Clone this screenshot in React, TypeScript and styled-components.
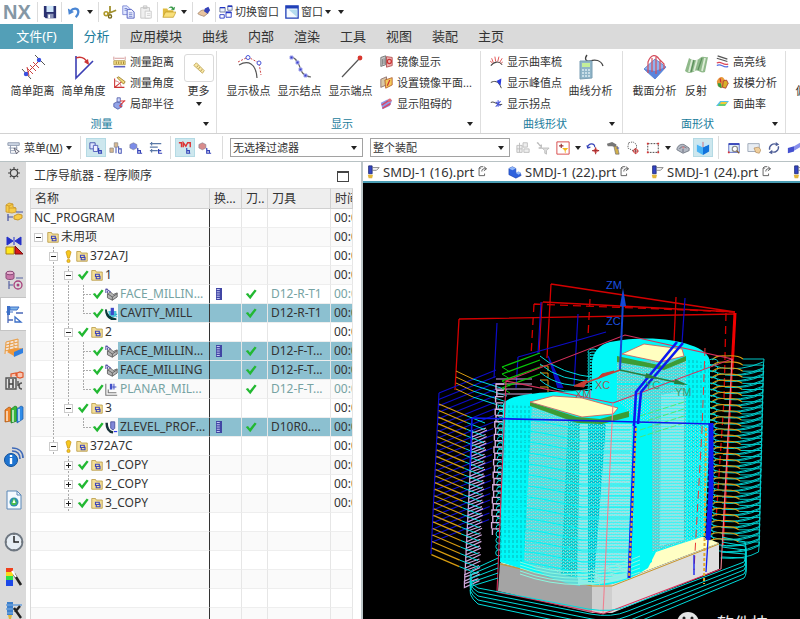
import React from "react";
import styled, { createGlobalStyle, css } from "styled-components";

const GlobalStyle = createGlobalStyle`
  *, *::before, *::after { box-sizing: border-box; }
  html, body { margin: 0; padding: 0; }
  body {
    background: #fff;
    color: #333;
    font-family: "Noto Sans", "Noto Sans CJK SC", sans-serif;
    font-size: 11px;
    line-height: 16px;
  }
  button, select {
    font: inherit;
    color: inherit;
    background: none;
    border: 0;
    padding: 0;
    margin: 0;
    border-radius: 0;
  }
`;

/* ---------- icons ---------- */

type Kids = { children?: React.ReactNode };
const Glyph = styled.svg<{ $size: number }>`
  display: block;
  flex: none;
  width: ${(p) => p.$size}px;
  height: ${(p) => p.$size}px;
  fill: none;
`;
const Pic = ({ size = 14, box = 16, children }: { size?: number; box?: number } & Kids) => (
  <Glyph $size={size} viewBox={`0 0 ${box} ${box}`} aria-hidden="true">
    {children}
  </Glyph>
);

const Save = () => (
  <Pic>
    <path d="M1 1h14v14H3l-2-2z" fill="#2a3170" />
    <path d="M4 1h8v7H4z" fill="#cfe6fa" />
    <path d="M5 10h7v5H5z" fill="#8a93b8" />
    <path d="M6 11h2v4H6z" fill="#fff" />
  </Pic>
);
const Undo = () => (
  <Pic>
    <path d="M4 7C7 3 13 3 13 8c0 3-1 4-3 6" stroke="#4a86d4" strokeWidth="2.600" />
    <path d="M1 4l1 7 6-3z" fill="#4a86d4" />
  </Pic>
);
const Cut = () => (
  <Pic>
    <path d="M8 1v8M15 6L5 10" stroke="#a08f2c" strokeWidth="2" />
    <circle cx="3.500" cy="10" r="2.200" stroke="#b09a2a" strokeWidth="1.800" />
    <circle cx="8" cy="13" r="1.800" stroke="#7a6c1a" strokeWidth="1.600" />
  </Pic>
);
const Copy = () => (
  <Pic>
    <path d="M2 1h5l3 3v7H2z" fill="#dfe6ff" stroke="#7a86d4" />
    <path d="M7 5h5l3 3v7H7z" fill="#eef1ff" stroke="#4652bc" />
    <path d="M4 4h3M4 6h3M9 9h4M9 11h4M9 13h4" stroke="#7080cc" />
  </Pic>
);
const Paste = () => (
  <Pic>
    <path d="M2 3h10v12H2zM5 1h4v3H5z" fill="#efefef" stroke="#c4c4c4" />
    <path d="M7 7h7v8H7z" fill="#fafafa" stroke="#c8c8c8" />
    <path d="M9 10h4M9 12h4" stroke="#d0d0d0" />
  </Pic>
);
const Open = () => (
  <Pic>
    <path d="M1 4h5l1 2h6v8H1z" fill="#e0bb40" />
    <path d="M1 14l3-6h12l-3 6z" fill="#f9e07a" stroke="#b8901c" strokeWidth=".7" />
    <path d="M7 4c2-3 5-3 6-1l2-1-1 4-4-1 1.500-.8C11 3 9 3 7 4z" fill="#3a9a4a" />
  </Pic>
);
const Touch = () => (
  <Pic>
    <path d="M1 10c2-3 5-5 8-4l4 3-5 4c-2-1-4-1-7-3z" fill="#e8c5a0" stroke="#9a7a60" strokeWidth=".8" />
    <path d="M9 4l4-2 2 4-3 4-4-3z" fill="#3442b8" />
  </Pic>
);
const SwitchWin = () => (
  <Pic>
    <path d="M1 3h6v5H1zM10 1h5v5h-5z" fill="#eef4ff" stroke="#6a7698" />
    <path d="M1 11h5v4H1zM8 8h6v6H8z" fill="#fff" stroke="#2436c4" />
    <path d="M1 3h6M10 1.500h5M8 8.500h6" stroke="#2436c4" strokeWidth="1.600" />
  </Pic>
);
const WinIcon = () => (
  <Pic>
    <path d="M1 1h14v14H1z" fill="#f4fafe" stroke="#2140b8" strokeWidth="1.500" />
    <path d="M1 1h14v3H1z" fill="#2140b8" />
    <path d="M4 5h10v9z" fill="#b4dcee" />
  </Pic>
);
const SimpleDist = () => (
  <Pic size={26} box={26}>
    <path d="M2 15l9 10M15 1l10 10" stroke="#555" />
    <path d="M5 21L20 6" stroke="#c33" />
    <path d="M7 14l6 6M10 11l6 6M13 8l6 6M7 13l2 9" stroke="#c44" />
    <circle cx="6" cy="20" r="2.200" fill="#3a4fe0" />
    <circle cx="19" cy="6" r="2.200" fill="#3a4fe0" />
  </Pic>
);
const SimpleAngle = () => (
  <Pic size={26} box={26}>
    <path d="M5 2v22L22 7" stroke="#3b3fb4" strokeWidth="1.600" />
    <path d="M5 4c5-2 9 0 12 5" stroke="#c33" strokeWidth="1.300" />
    <path d="M18 11l-5-3 4-3z" fill="#c33" />
  </Pic>
);
const RulerH = () => (
  <Pic size={13}>
    <path d="M1 7h14v5H1z" fill="#f7e08a" stroke="#b09848" />
    <path d="M4 8v3M7 8v3M10 8v3M13 8v3" stroke="#8a7020" />
    <path d="M1 2v4M15 2v4M2 4h12" stroke="#c88" />
    <path d="M1 14.500h14" stroke="#3b3fb4" strokeWidth="1.500" />
  </Pic>
);
const AngleRuler = () => (
  <Pic size={13}>
    <path d="M2 3v11h12M2 14L12 6" stroke="#c33" strokeWidth="1.300" />
    <path d="M2 6c5 0 8 4 8 8" stroke="#c66" />
    <path d="M5 2l2-1 8 6-2 3z" fill="#f3d97a" stroke="#94782a" />
  </Pic>
);
const Radius = () => (
  <Pic size={13}>
    <path d="M1 8l4-2 6 2v4l-5 3-5-3z" fill="#93a5e8" stroke="#4b57a4" />
    <path d="M5 1h4v5H5z" fill="#cfd8ff" stroke="#4b57a4" />
    <path d="M15 4L8 11M9 5h6M8 11l3 1" stroke="#d33" strokeWidth="1.300" />
  </Pic>
);
const MoreRuler = () => (
  <Pic size={14}>
    <path d="M2 5l3-3 9 9-2 3z" fill="#f9e7a4" stroke="#c0a85c" />
    <path d="M7 5L5.500 7M9 7l-1.500 2M11.500 9.500L10 11.500" stroke="#a8904a" />
  </Pic>
);
const Poles = () => (
  <Pic size={26} box={26}>
    <path d="M3 11c9-5 17-2 18 13" stroke="#555" strokeWidth="1.200" />
    <path d="M2 8l10-5 11 6 2 12" stroke="#c44" strokeDasharray="2 1.500" />
    <circle cx="12" cy="3.500" r="2" fill="#fff" stroke="#4653d8" />
    <circle cx="23" cy="9" r="2" fill="#fff" stroke="#4653d8" />
  </Pic>
);
const Knots = () => (
  <Pic size={26} box={26}>
    <path d="M4 3c4 0 6 4 8 8s2 11 12 12" stroke="#666" strokeWidth="1.200" />
    <g fill="#3a41c8" stroke="#a5a8ee">
      <path d="M3 2h3v3H3zM9 7h3v3H9zM12 14h3v3h-3zM17 20h3v3h-3z" />
    </g>
  </Pic>
);
const Ends = () => (
  <Pic size={26} box={26}>
    <path d="M4 23L21 5" stroke="#555" strokeWidth="1.200" />
    <circle cx="22" cy="4" r="2.400" fill="#d8372f" />
  </Pic>
);
const Mirror = () => (
  <Pic size={13}>
    <path d="M1 3l6-2v11l-6 2z" fill="#c8c8c8" stroke="#666" />
    <path d="M3 5v7M5 4v7" stroke="#777" />
    <path d="M8 2l7 1v10l-7 2z" fill="#f0b0b0" stroke="#a44" />
    <circle cx="11.500" cy="8" r="2.500" stroke="#c33" strokeWidth="1.500" />
  </Pic>
);
const MirrorSet = () => (
  <Pic size={13}>
    <path d="M1 4l7-3v10l-7 3z" fill="#d8c8a8" stroke="#866" />
    <path d="M6 5l9-3v9l-8 4z" fill="#f3c95a" stroke="#b25a2a" />
    <path d="M9 12l3-7" stroke="#c33" strokeWidth="1.500" />
  </Pic>
);
const Block = () => (
  <Pic size={13}>
    <path d="M1 7l8-4 6 1-3 7-9 4z" fill="#8e9de8" />
    <path d="M2 10L13 3M3 14l10-6" stroke="#d6486a" strokeWidth="1.800" />
    <circle cx="12" cy="4" r="2.200" fill="#e0707a" />
  </Pic>
);
const Comb = () => (
  <Pic size={13}>
    <path d="M1 13c4-5 10-6 14-1" stroke="#444" strokeWidth="1.300" />
    <path d="M3 10L0 7M4 9L2 4M7 8L6 2M9.500 8L11 2M12 9l3-5M13.500 10.500L16 8" stroke="#d33" />
  </Pic>
);
const Peak = () => (
  <Pic size={13}>
    <path d="M1 8c4-2 9-3 13 7" stroke="#444" strokeWidth="1.200" />
    <path d="M8 6l6-3-1 9z" fill="#2a3be0" />
  </Pic>
);
const Inflect = () => (
  <Pic size={13}>
    <path d="M1 7c4-4 6 4 14 2" stroke="#555" strokeWidth="1.300" />
    <path d="M7 6l6 5M13 5l-6 7M10 4v8" stroke="#4452d8" strokeWidth="1.300" />
  </Pic>
);
const CurveCalc = () => (
  <Pic size={26} box={26}>
    <path d="M9 1c-3 4-1 7 3 6 5-2 11-1 13 5" stroke="#444" strokeWidth="1.300" />
    <path d="M2 7h12v17l-12 1z" fill="#8fb5c8" stroke="#7a9fb4" />
    <path d="M4 9h8v4H4z" fill="#c4ef9a" />
    <path d="M4 16h9M4 19h9M4 22h9" stroke="#dcebf2" strokeWidth="1.600" strokeDasharray="2 1" />
  </Pic>
);
const Section = () => (
  <Pic size={26} box={26}>
    <path d="M2 15L13 5l11 8-11 12z" fill="#8fb3f0" stroke="#6a8fd4" />
    <path d="M2 15l11 2 11-4-11 12z" fill="#5a84dc" />
    <path d="M6 19V8c3-8 8-8 11-3l5 5v5M10 18V4M14 20V3M18 17V6" stroke="#d44c5c" strokeWidth="1.200" />
  </Pic>
);
const Reflect = () => (
  <Pic size={26} box={26}>
    <path d="M2 17L6 4c4 3 8 3 11 0 3-3 5 0 8-1l-3 15c-4 2-7-3-10-1s-7 3-10 0z" fill="#8fb98a" />
    <path d="M9 6L6 18M14 6l-3 11M22 4l-3 13" stroke="#dcecd6" strokeWidth="1.800" />
    <path d="M11 6L8 18M19 4l-4 12" stroke="#5c8f5c" strokeWidth="1.200" />
  </Pic>
);
const Highlight = () => (
  <Pic size={13}>
    <path d="M2 1l12 4M1 4l13 4" stroke="#555" strokeWidth="1.500" />
    <path d="M1 10c5-4 8 4 14 1" stroke="#d45" strokeWidth="1.500" />
    <path d="M1 13c5-4 8 4 14 1" stroke="#5a72e0" strokeWidth="1.500" />
  </Pic>
);
const Draft = () => (
  <Pic size={13}>
    <path d="M1 7c1-5 6-7 8-5l3 4-2 7-4 2-4-3z" fill="#e89a3a" />
    <path d="M2 9l4 0 1 6-4-2z" fill="#2f9b46" />
    <path d="M9 6l4-1 2 4-3 6-4-1z" fill="#d8b02a" stroke="#a33" />
    <path d="M5 3l1 5" stroke="#c33" strokeWidth="1.500" />
  </Pic>
);
const FaceCurv = () => (
  <Pic size={13}>
    <path d="M0 11l5-6h11l-5 6z" fill="#58c0e8" />
    <path d="M3 9l10-1.500L11 11H3z" fill="#6ad06a" />
    <path d="M6 6h8l-2 2.500H5z" fill="#f3c93a" />
  </Pic>
);
const MenuTeeth = () => (
  <Pic>
    <path d="M1 2h13v3H1z" fill="#d3dbe8" stroke="#8893a8" />
    <path d="M4 5v9h7V5M2 8h10M4 11h6" stroke="#8f9ab0" />
    <path d="M8 8l6 4-2 .8-1 2z" fill="#fff" stroke="#556" />
  </Pic>
);
const Nodes = () => (
  <Pic>
    <path d="M1 2h6v7H1z" fill="#dfe6ff" stroke="#3c4ba8" />
    <path d="M5 5h5v7H5z" fill="#eef" stroke="#4a58b8" />
    <path d="M11 8v6h4M11 11h3v3" stroke="#3442b8" strokeWidth="1.400" />
  </Pic>
);
const NodeTree = () => (
  <Pic>
    <path d="M1 8h4v5H1zM6 2h4v5H6z" fill="#d8b890" stroke="#888" strokeWidth=".8" />
    <path d="M8 7v7M11 6v8M11 9h3v5h-3" stroke="#4a58b8" strokeWidth="1.200" />
  </Pic>
);
const CubeTree = ({ c }: { c: string }) => (
  <Pic>
    <path d="M1 4l4-2 4 2v4l-4 2-4-2z" fill={c} stroke="#778" strokeWidth=".6" />
    <path d="M10 8v6h5M10 11h3v3" stroke="#3442b8" strokeWidth="1.400" />
  </Pic>
);
const Bars = () => (
  <Pic>
    <path d="M1 3h13M1 7h9M1 11h9M3 1v4M3 9v4" stroke="#5c7aa8" strokeWidth="1.400" />
    <path d="M11 9v5h4M11 11h3" stroke="#3442b8" strokeWidth="1.400" />
  </Pic>
);
const Wave = () => (
  <Pic>
    <path d="M1 2h3v5M6 7V2l3 4 2-4h3v5" stroke="#d33" strokeWidth="1.600" />
    <path d="M10 8v6h4M10 11h3v3" stroke="#3442b8" strokeWidth="1.300" />
  </Pic>
);
const Pale = () => (
  <Pic>
    <path d="M1 5h6v8H1zM8 2h5v5H8zM9 9h6v4H9z" fill="#eee" stroke="#bbb" />
    <path d="M4 2v11M1 9h6" stroke="#bbb" />
  </Pic>
);
const PaleFilter = () => (
  <Pic>
    <path d="M1 2c3 0 2 4 5 4M6 4v4H3" stroke="#bbb" strokeWidth="1.500" />
    <path d="M7 8h8l-3 3v4l-2-1v-3z" fill="#ddd" stroke="#bbb" />
  </Pic>
);
const BoxFilter = () => (
  <Pic>
    <path d="M1 1h14v14H1z" stroke="#d63a3a" />
    <path d="M6 3v5M3.500 5.500h5" stroke="#933" strokeWidth="1.300" />
    <path d="M7 8h7l-3 3v3l-1-1v-2z" fill="#f3b81c" />
  </Pic>
);
const ArcPoint = () => (
  <Pic>
    <path d="M2 7c1-5 8-5 8 0M1 5l1 3 3-1" stroke="#3442b8" strokeWidth="1.300" />
    <path d="M11 7v8M7 11h8" stroke="#933" strokeWidth="1.200" />
    <circle cx="11" cy="11" r="2" stroke="#d33" />
  </Pic>
);
const Hammer = () => (
  <Pic>
    <path d="M1 3l6-2 5 3-1 3-4-1-5 0z" fill="#777" />
    <path d="M9 6l2 9h4l-2-9z" fill="#d2b04a" stroke="#667" strokeWidth=".7" />
    <path d="M12 8h3" stroke="#3442b8" />
  </Pic>
);
const Dots = () => (
  <Pic>
    <path d="M3 2l5-1 4 3v4l-4 3-6-3z" stroke="#555" strokeDasharray="1.500 1.200" />
    <path d="M11 8v7M7.500 11.500h7" stroke="#833" />
    <circle cx="11" cy="11.500" r="2.500" stroke="#d33" />
  </Pic>
);
const Marquee = () => (
  <Pic>
    <path d="M2 3h12v10H2z" stroke="#333" strokeDasharray="2 1.300" />
    <path d="M1 2h2v2H1zM13 2h2v2h-2zM1 12h2v2H1zM13 12h2v2h-2z" fill="#d33" />
  </Pic>
);
const Shell = () => (
  <Pic>
    <path d="M1 10c0-4 4-7 8-6l6 4v3l-7 3z" fill="#b4bac4" stroke="#6f7682" />
    <path d="M4 9c2-3 5-3 8-1M8 13V9" stroke="#667" />
    <path d="M7 6l3 1-2 2z" fill="#d88" />
  </Pic>
);
const BlueCube = () => (
  <Pic>
    <path d="M1 4l7 3v9l-7-4z" fill="#49b3f5" />
    <path d="M15 4L8 7v9l7-4z" fill="#1273dc" />
    <path d="M1 4l7-3 7 3-7 3z" fill="#bfe6fb" />
    <path d="M8 1v6" stroke="#d44" strokeWidth=".8" />
  </Pic>
);
const FitView = () => (
  <Pic>
    <path d="M2 3h12v10H2z" fill="#e2f0fa" stroke="#5666c0" />
    <path d="M2 3.500h12" stroke="#3442b8" strokeWidth="2" />
    <circle cx="9" cy="9" r="3" fill="#fff" stroke="#888" strokeWidth="1.300" />
    <path d="M11 11l3 3" stroke="#875a2a" strokeWidth="1.500" />
    <path d="M1 12h2v2H1z" fill="#d33" />
  </Pic>
);
const PanView = () => (
  <Pic>
    <path d="M1 3h13v9H1z" fill="#e8edf3" stroke="#99a3b4" />
    <path d="M8 8l5-1 3 3-2 4-4-1z" fill="#f0cf9c" stroke="#a98050" strokeWidth=".7" />
  </Pic>
);
const RotateView = () => (
  <Pic>
    <path d="M3 10a5.500 5.500 0 0 1 8-6M13 6a5.500 5.500 0 0 1-8 6" stroke="#4f5f98" strokeWidth="1.600" />
    <path d="M10 1l4 3-4 2zM6 10l-4 3 4 2z" fill="#4f5f98" />
  </Pic>
);
const Tube = () => (
  <Pic>
    <path d="M1 8l7-2v6l-7 2z" fill="#4450d0" />
    <path d="M8 6l7-4v5l-7 4z" fill="#8890ec" />
  </Pic>
);
const PartMill = () => (
  <Pic>
    <path d="M3 1h4v9H3z" fill="#3344c4" stroke="#23307a" />
    <path d="M2 11h6l-1 4H3z" fill="#e2b73c" />
    <path d="M7 3h8l-3 3H7" stroke="#777" />
  </Pic>
);
const PartSolid = () => (
  <Pic>
    <path d="M1 4l4-2 4 2v5l5 0 1 3-6 3-8-4z" fill="#2f62dd" stroke="#1a3fa8" strokeWidth=".6" />
    <path d="M1 4l4-2 4 2-4 2zM9 9l3-2 3 2-3 2z" fill="#8fb6f8" />
  </Pic>
);
const Popout = () => (
  <Pic size={11}>
    <path d="M6 3H3v11h8v-3M3 3l2-2h4" stroke="#555" strokeWidth="1.300" />
    <path d="M7 8c0-4 2-4 6-4M10 1l4 3-4 3" stroke="#555" strokeWidth="1.300" />
  </Pic>
);
const Check = () => (
  <Pic size={12}>
    <path d="M1 8l3-1.500L6.500 10 13 2l2.500 1.500L7 15z" fill="#22b832" />
  </Pic>
);
const Warn = () => (
  <Pic size={13}>
    <path d="M5 3c0-3 6-3 6 0L9 10H7z" fill="#f7c81e" stroke="#c08a10" strokeWidth=".8" />
    <circle cx="8" cy="13.500" r="2" fill="#f7c81e" stroke="#c08a10" strokeWidth=".8" />
  </Pic>
);
const Folder = () => (
  <Pic size={12}>
    <path d="M1 2h5l1 2h8v11H1z" fill="#f4df98" stroke="#b39338" />
    <path d="M6 7h5v3H6zM7 10v3h5V9" stroke="#3f45b8" strokeWidth="1.500" />
  </Pic>
);
const FaceOp = () => (
  <Pic size={13}>
    <path d="M3 7l4-2 3 3 5-2v5l-6 4-6-3z" fill="#b4b4b4" stroke="#555" />
    <path d="M3 7l6 4v4M9 11l6-4" stroke="#555" />
    <path d="M1 1l6 4M1 1v5M3 1v5" stroke="#5c58a8" strokeWidth="1.300" />
  </Pic>
);
const CavityOp = () => (
  <Pic size={13}>
    <path d="M1 3c1 7 5 11 13 12H8C3 13 1 9 1 3z" fill="#0c3a3a" stroke="#0c3a3a" strokeWidth="2" />
    <path d="M4 5h10v6l-4 2-5-3z" fill="#4cc4d8" />
    <path d="M7 1h4v9H7z" fill="#3d48c8" />
    <path d="M12 9h3M13 12h2" stroke="#2fb0c8" strokeWidth="1.500" />
  </Pic>
);
const PlanarOp = () => (
  <Pic size={13}>
    <path d="M1 1v14h14M4 8v4h10" stroke="#777" strokeWidth="1.300" />
    <path d="M6 1h3v7H6z" fill="#4552c8" />
    <path d="M11 1v7M9 5h5" stroke="#4552c8" strokeWidth="1.300" />
  </Pic>
);
const ZlevelOp = () => (
  <Pic size={13}>
    <path d="M2 2c0 7 2 11 8 12" stroke="#173238" strokeWidth="3" />
    <path d="M7 1h5v8l-2 2-3-2z" fill="#8088d8" stroke="#444c9a" />
    <path d="M11 13h4" stroke="#2c3af0" strokeWidth="1.500" />
  </Pic>
);
const Changer = () => (
  <Pic size={12}>
    <path d="M4 0h8v16H4z" fill="#4146a4" />
    <path d="M5 2h4M5 5h4M5 8h4M5 11h4M5 14h4" stroke="#c4c8f4" strokeWidth="1.500" />
  </Pic>
);

const Gear = () => (
  <Pic size={12}>
    <circle cx="8" cy="8" r="4.800" stroke="#444" strokeWidth="1.700" />
    <path d="M8 0v3M8 13v3M0 8h3M13 8h3M2.500 2.500l2 2M11.500 11.500l2 2M13.500 2.500l-2 2M4.500 11.500l-2 2" stroke="#444" strokeWidth="1.500" />
  </Pic>
);
const SideAssembly = () => (
  <Pic size={20} box={20}>
    <path d="M2 3l3-2 4 1v3l3 1v4l-4 1-6-1z" fill="#f7cc48" stroke="#c8962a" strokeWidth=".8" />
    <path d="M2 3l3 1 4-2M5 4v6M5 6l7 0" stroke="#c8962a" strokeWidth=".8" />
    <path d="M4 12v7M4 15h5M12 10h7" stroke="#4450a0" strokeWidth="1.200" />
    <path d="M10 14l4-2 4 1v3l-4 2-4-1z" fill="#f7cc48" stroke="#c8962a" />
  </Pic>
);
const SideConstraint = () => (
  <Pic size={20} box={20}>
    <path d="M3 1l6 4-6 4zM17 1l-6 4 6 4zM10 1v8" fill="#2430c8" stroke="#2430c8" />
    <path d="M2 11h8v7H2z" fill="#ffe81c" stroke="#b08a10" />
    <path d="M11 10l8 8h-8z" fill="#d81818" stroke="#7a1010" />
  </Pic>
);
const SidePart = () => (
  <Pic size={20} box={20}>
    <path d="M2 3v5c0 2 8 2 8 0V3" fill="#c878a8" stroke="#8a4a78" />
    <ellipse cx="6" cy="3" rx="4" ry="1.800" fill="#e8b0d0" stroke="#8a4a78" />
    <path d="M5 11v8M5 15h4M12 8h7" stroke="#5560a0" strokeWidth="1.200" />
    <circle cx="14" cy="15" r="4" stroke="#a8407c" strokeWidth="1.300" />
    <circle cx="14" cy="15" r="1.500" fill="#a8407c" />
  </Pic>
);
const SideOps = () => (
  <Pic size={20} box={20}>
    <path d="M3 2h3v9H3z" fill="#3d70c8" />
    <path d="M6 3h9l-2 3H6zM2 8h7" fill="#7fb4e8" stroke="#3d70c8" />
    <path d="M4 11v8M4 16h5M12 9h7" stroke="#4a68b8" strokeWidth="1.300" />
    <path d="M11 13v5h6z" fill="#fff" stroke="#3d70c8" strokeWidth="1.300" />
  </Pic>
);
const SideMachine = () => (
  <Pic size={20} box={20}>
    <path d="M2 4l12-3v11L1 16z" fill="#f4e4d8" />
    <path d="M2 4l12-3M2 7l12-3M1 10l13-3M1 13l13-3M2 4L1 16M6 3L5 14M10 2v11M14 1v10" stroke="#e8a04c" strokeWidth="1.100" />
    <path d="M9 13l10-3v5l-9 4z" fill="#2f7fe0" />
    <path d="M3 14l4-3 12-1-9 4 0 4z" fill="#f0983a" />
  </Pic>
);
const SideTools = () => (
  <Pic size={20} box={20}>
    <path d="M2 7h10v11H2z" fill="#e4e4e4" stroke="#555" strokeWidth="1.400" />
    <path d="M5 8v9M9 8v9M5 13h4" stroke="#444" strokeWidth="1.500" />
    <path d="M7 6V3l5-1v3M13 2l3-1 3 1v4l-3 1-3-1z" fill="#f8c4b0" stroke="#e0582c" strokeWidth="1.200" />
    <path d="M14 10v5M18 12c-4 0-4 6 0 6" stroke="#555" strokeWidth="1.400" />
  </Pic>
);
const SideLibrary = () => (
  <Pic size={20} box={20}>
    <path d="M1 6l4-3 2 1v13l-6 1z" fill="#ef8428" stroke="#a8500c" strokeWidth=".7" />
    <path d="M7 5l4-3 2 1v14l-6 2z" fill="#38b83c" stroke="#1a7a1e" strokeWidth=".7" />
    <path d="M13 5l4-3 2 1v12l-6 4z" fill="#2f8ce8" stroke="#1a5aa8" strokeWidth=".7" />
    <path d="M3 7v10M9 6v12M15 5v12" stroke="#fff" strokeWidth="1.200" />
  </Pic>
);
const SideInfo = () => (
  <Pic size={22} box={22}>
    <circle cx="8" cy="14" r="6.500" fill="#1f74d0" stroke="#0f4f9a" />
    <path d="M8 9v2M8 12v6" stroke="#fff" strokeWidth="2.400" />
    <path d="M9 5c5 0 8 3 8 8M9 2c7 0 11 4 11 10" stroke="#3f6ab8" strokeWidth="1.700" />
  </Pic>
);
const SideWeb = () => (
  <Pic size={20} box={20}>
    <path d="M3 1h10l4 4v14H3z" fill="#f4f9ff" stroke="#5a88b8" />
    <path d="M13 1v4h4" stroke="#5a88b8" />
    <circle cx="10" cy="12" r="4.500" fill="#2f8fae" />
    <path d="M7 13l3-5 3 5-2 2H8z" fill="#4cc04c" />
    <path d="M10 9l1.500 4h-3z" fill="#fff" />
  </Pic>
);
const SideClock = () => (
  <Pic size={20} box={20}>
    <circle cx="10" cy="10" r="8.500" fill="#e6edf4" stroke="#6d7680" strokeWidth="1.800" />
    <path d="M10 4v6h5" stroke="#222" strokeWidth="1.500" />
    <path d="M10 2v1M10 17v1M2 10h1M17 10h1" stroke="#555" />
  </Pic>
);
const SideColors = () => (
  <Pic size={20} box={20}>
    <path d="M2 1h7v4H2z" fill="#f0401c" />
    <path d="M2 5h7v4H2z" fill="#f8d81c" />
    <path d="M2 9h7v4H2z" fill="#2ce048" />
    <path d="M2 13h7v6H2z" fill="#1c48e8" />
    <path d="M10 7l7 11" stroke="#222" strokeWidth="2.600" />
    <path d="M8 4l4 6" stroke="#fff" strokeWidth="2" />
  </Pic>
);
const SideMill = () => (
  <Pic size={20} box={20}>
    <path d="M3 2h6v13H3z" fill="#3d80cc" />
    <path d="M2 5h16M2 9h10M3 13h6" stroke="#6aa0dc" strokeWidth="1.500" />
    <path d="M4 15h4l-1 4H5z" fill="#e2b73c" />
    <path d="M10 8l7 10M16 6l-5 6" stroke="#222" strokeWidth="2.400" />
  </Pic>
);

const Caret = styled.span`
  flex: none;
  width: 0;
  height: 0;
  border: 3px solid transparent;
  border-top: 4px solid #222;
  border-bottom: 0;
`;

/* ---------- frame ---------- */

const Frame = styled.div`
  display: flex;
  flex-direction: column;
  height: 100vh;
  overflow: hidden;
  background: #fff;
`;

const QuickBar = styled.header`
  display: flex;
  flex: none;
  align-items: center;
  height: 24px;
  padding-left: 3px;
`;
const Logo = styled.span`
  width: 31px;
  font: bold 20px/24px "Liberation Sans", sans-serif;
  color: #8497a5;
`;
const Rule = styled.span<{ $gap?: number }>`
  flex: none;
  align-self: stretch;
  width: 1px;
  margin: 2px ${(p) => p.$gap ?? 2}px;
  background: #dcdcdc;
`;
const QuickButton = styled.button<{ $w?: number }>`
  display: flex;
  flex: none;
  align-items: center;
  justify-content: center;
  gap: 2px;
  width: ${(p) => (p.$w ? p.$w + "px" : "auto")};
  height: 22px;
  padding: 0 1px;
  white-space: nowrap;
`;

const MenuTabs = styled.nav`
  display: flex;
  flex: none;
  height: 25px;
  background: #dadada;
`;
const MenuTab = styled.button<{ $kind?: "file" | "on" }>`
  flex: none;
  padding: 0 10px;
  font-size: 13px;
  line-height: 25px;
  white-space: nowrap;
  ${(p) =>
    p.$kind === "file" &&
    css`
      width: 73px;
      background: #539fb7;
      color: #fff;
    `}
  ${(p) =>
    p.$kind === "on" &&
    css`
      width: 47px;
      background: #fff;
      color: #1a7c9c;
    `}
`;

const Ribbon = styled.section`
  display: flex;
  flex: none;
  height: 85px;
  padding-top: 2px;
  border-bottom: 1px solid #d2d2d2;
  overflow: hidden;
`;
const Group = styled.div<{ $w: number; $pad: number }>`
  display: flex;
  flex: none;
  flex-direction: column;
  width: ${(p) => p.$w}px;
  padding-left: ${(p) => p.$pad}px;
  border-right: 1px solid #dedede;
`;
const GroupBody = styled.div`
  display: flex;
  height: 63px;
`;
const GroupFoot = styled.div<{ $pad: number }>`
  display: flex;
  align-items: center;
  height: 20px;
  margin-left: -${(p) => p.$pad}px;
  padding-right: 7px;
  color: #1a7c9c;
`;
const GroupName = styled.span`
  flex: 1;
  text-align: center;
`;
const BigButton = styled.button<{ $w?: number }>`
  display: flex;
  flex: none;
  flex-direction: column;
  align-items: center;
  gap: 3px;
  width: ${(p) => p.$w ?? 51}px;
  padding-top: 3px;
  white-space: nowrap;
`;
const MoreBox = styled.span`
  display: grid;
  place-items: center;
  width: 30px;
  height: 28px;
  margin-bottom: -2px;
  border: 1px solid #dadada;
  border-radius: 3px;
`;
const SmallStack = styled.div<{ $w: number }>`
  display: flex;
  flex: none;
  flex-direction: column;
  width: ${(p) => p.$w}px;
  padding-left: 4px;
`;
const SmallButton = styled.button`
  display: flex;
  align-items: center;
  gap: 4px;
  height: 21px;
  white-space: nowrap;
`;

const Toolbar = styled.div`
  display: flex;
  flex: none;
  align-items: center;
  height: 28px;
  padding-left: 7px;
  border-bottom: 1px solid #b8c2c4;
  overflow: hidden;
`;
const Tool = styled.button<{ $on?: boolean }>`
  display: grid;
  flex: none;
  place-items: center;
  width: 20px;
  height: 19px;
  background: ${(p) => (p.$on ? "#cde7ee" : "transparent")};
  box-shadow: ${(p) => (p.$on ? "inset 0 0 0 1px #b4dae4" : "none")};
`;
const ToolCaret = styled.button`
  display: grid;
  flex: none;
  place-items: center;
  width: 10px;
  height: 19px;
`;
const MenuButton = styled.button`
  display: flex;
  flex: none;
  align-items: center;
  gap: 3px;
  width: 68px;
  white-space: nowrap;
`;
const Pick = styled.label<{ $w: number; $gap: number }>`
  position: relative;
  display: flex;
  flex: none;
  align-items: center;
  width: ${(p) => p.$w}px;
  margin-right: ${(p) => p.$gap}px;
  ${Caret} {
    position: absolute;
    right: 6px;
    pointer-events: none;
  }
`;
const PickSelect = styled.select`
  appearance: none;
  width: 100%;
  height: 19px;
  padding: 0 2px;
  border: 1px solid #a2a2a2;
  background: #fff;
`;

const Workspace = styled.main`
  display: flex;
  flex: 1;
  min-height: 0;
`;

/* ---------- resource bar ---------- */

const SideBar = styled.nav`
  flex: none;
  width: 26px;
  background: #dadada;
  overflow: hidden;
`;
const SideButton = styled.button<{ $h?: number; $on?: boolean }>`
  display: grid;
  place-items: center;
  width: 26px;
  height: ${(p) => p.$h ?? 34}px;
  margin-bottom: ${(p) => (p.$h === 22 ? 11 : 0)}px;
  padding-left: 2px;
  background: ${(p) => (p.$on ? "#fff" : "transparent")};
  box-shadow: ${(p) => (p.$on ? "inset 1px 1px 0 #c4c4c4, inset 0 -1px 0 #c4c4c4" : "none")};
`;

/* ---------- navigator ---------- */

const Navigator = styled.section`
  display: flex;
  flex: none;
  flex-direction: column;
  width: 337px;
  padding: 0 8px 0 4px;
  border-right: 2px solid #bcc6c8;
  overflow: hidden;
`;
const NavHead = styled.div`
  display: flex;
  flex: none;
  align-items: center;
  justify-content: space-between;
  height: 26px;
  padding: 2px 4px 0 4px;
  font-size: 12px;
`;
const MaxButton = styled.button`
  width: 12px;
  height: 11px;
  border: 1px solid #444;
  border-top-width: 2px;
`;
const Tree = styled.table`
  width: 323px;
  table-layout: fixed;
  border-collapse: separate;
  border-spacing: 0;
  border-left: 1px solid #d8d8d8;
  font-size: 12px;
  line-height: 18px;
`;
const Th = styled.th`
  height: 21px;
  padding: 0 0 0 4px;
  border-top: 1px solid #ddd;
  border-right: 1px solid #d0d0d0;
  border-bottom: 1px solid #d0d0d0;
  background: #eee;
  font-weight: normal;
  text-align: left;
  white-space: nowrap;
  overflow: hidden;
`;
const Tr = styled.tr<{ $alt: boolean }>`
  background: ${(p) => (p.$alt ? "#fafafa" : "#fff")};
`;
const Td = styled.td<{ $on?: boolean; $dim?: boolean; $name?: boolean }>`
  height: 19px;
  padding: 0 0 0 ${(p) => (p.$name ? 0 : 3)}px;
  border-right: 1px solid ${(p) => (p.$name ? "#333" : "#e6e6e6")};
  border-bottom: 1px solid #eee;
  background: ${(p) => (p.$on && !p.$name ? "#8cc0d0" : "transparent")};
  color: ${(p) => (p.$dim ? "#76a3a3" : "#333")};
  white-space: nowrap;
  overflow: hidden;
`;
const NameLine = styled.div`
  display: flex;
  align-items: center;
  height: 18px;
`;
const Mark = styled.span<{ $w?: number }>`
  display: grid;
  flex: none;
  place-items: center;
  width: ${(p) => p.$w ?? 14}px;
`;
const NameText = styled.span<{ $on?: boolean; $root?: boolean }>`
  flex: 1;
  min-width: 0;
  height: 18px;
  padding-left: ${(p) => (p.$root ? 3 : 2)}px;
  background: ${(p) => (p.$on ? "#8cc0d0" : "transparent")};
  overflow: hidden;
  text-overflow: ellipsis;
`;
const dots = "repeating-linear-gradient(#aaa 0 2px, transparent 2px 3px)";
const dashes = "repeating-linear-gradient(90deg, #aaa 0 2px, transparent 2px 3px)";
const Guide = styled.span<{ $k: string }>`
  display: grid;
  flex: none;
  place-items: center;
  width: 15px;
  height: 19px;
  background-repeat: no-repeat;
  ${(p) =>
    "|+".includes(p.$k) &&
    css`
      background-image: ${dots};
      background-size: 1px 19px;
      background-position: 7px 0;
    `}
  ${(p) =>
    "LT".includes(p.$k) &&
    css`
      background-image: ${dots}, ${dashes};
      background-size: 1px ${p.$k === "L" ? 9 : 19}px, 8px 1px;
      background-position: 7px 0, 7px 9px;
    `}
`;
const Expander = styled.button`
  display: block;
  width: 9px;
  height: 9px;
  border: 1px solid #ccc;
  background: #fff;
`;
const Twist = ({ open }: { open: boolean }) => (
  <Expander aria-label={open ? "折叠" : "展开"}>
    <Pic size={7} box={7}>
      <path d={open ? "M1 3.500h5" : "M1 3.500h5M3.500 1v5"} stroke="#222" />
    </Pic>
  </Expander>
);

type Row = {
  guides: string;
  open?: boolean;
  mark?: "ok" | "warn";
  icon?: React.ReactNode;
  name: string;
  on?: boolean;
  dim?: boolean;
  swap?: boolean;
  tool?: string;
};
const F = <Folder />;
const rows: Row[] = [
  { guides: "", name: "NC_PROGRAM" },
  { guides: "-", open: true, icon: F, name: "未用项" },
  { guides: " +", open: true, mark: "warn", icon: F, name: "372A7J" },
  { guides: " |+", open: true, mark: "ok", icon: F, name: "1" },
  { guides: " ||T", mark: "ok", icon: <FaceOp />, name: "FACE_MILLING_1", dim: true, swap: true, tool: "D12-R-T1" },
  { guides: " ||L", mark: "ok", icon: <CavityOp />, name: "CAVITY_MILL", on: true, tool: "D12-R-T1" },
  { guides: " |+", open: true, mark: "ok", icon: F, name: "2" },
  { guides: " ||T", mark: "ok", icon: <FaceOp />, name: "FACE_MILLING_2", on: true, swap: true, tool: "D12-F-T..." },
  { guides: " ||T", mark: "ok", icon: <FaceOp />, name: "FACE_MILLING", on: true, tool: "D12-F-T..." },
  { guides: " ||L", mark: "ok", icon: <PlanarOp />, name: "PLANAR_MIL...", dim: true, tool: "D12-F-T..." },
  { guides: " |+", open: true, mark: "ok", icon: F, name: "3" },
  { guides: " | L", mark: "ok", icon: <ZlevelOp />, name: "ZLEVEL_PROFILE", on: true, swap: true, tool: "D10R0...." },
  { guides: " +", open: true, mark: "warn", icon: F, name: "372A7C" },
  { guides: "  +", open: false, mark: "ok", icon: F, name: "1_COPY" },
  { guides: "  +", open: false, mark: "ok", icon: F, name: "2_COPY" },
  { guides: "  +", open: false, mark: "ok", icon: F, name: "3_COPY" },
];

const TreeRow = ({ row, index }: { row: Row; index: number }) => (
  <Tr $alt={index % 2 === 1}>
    <Td $name $dim={row.dim}>
      <NameLine>
        {[...row.guides].map((k, i) => (
          <Guide key={i} $k={k}>
            {"+-".includes(k) && <Twist open={!!row.open} />}
          </Guide>
        ))}
        {row.mark && <Mark>{row.mark === "ok" ? <Check /> : <Warn />}</Mark>}
        {row.icon && <Mark $w={13}>{row.icon}</Mark>}
        <NameText $on={row.on} $root={!row.guides}>{row.name}</NameText>
      </NameLine>
    </Td>
    <Td $on={row.on}>{row.swap && <Changer />}</Td>
    <Td $on={row.on}>{row.tool && <Check />}</Td>
    <Td $on={row.on} $dim={row.dim}>{row.tool}</Td>
    <Td $on={row.on} $dim={row.dim}>00:00</Td>
  </Tr>
);

/* ---------- graphics window ---------- */

const Graphics = styled.section`
  display: flex;
  flex: 1;
  flex-direction: column;
  min-width: 0;
`;
const DocTabs = styled.div`
  display: flex;
  flex: none;
  height: 21px;
  border-bottom: 2px solid #4a9db3;
  overflow: hidden;
`;
const DocTab = styled.button`
  display: flex;
  flex: none;
  align-items: center;
  gap: 3px;
  width: 142px;
  padding-left: 3px;
  font-size: 13px;
  white-space: nowrap;
`;
const Viewport = styled.div`
  flex: 1;
  min-height: 0;
  background: #000;
`;
const SceneSvg = styled.svg`
  display: block;
  width: 100%;
  height: 100%;
  fill: none;
`;

const range = (n: number) => Array.from({ length: n }, (_, i) => i);
const CYAN = "#00dcdc";

const Scene = () => (
  <SceneSvg viewBox="363 183 437 436" preserveAspectRatio="xMinYMin slice" role="img" aria-label="刀轨显示">
    <defs>
      <pattern id="mesh" width="4" height="3" patternUnits="userSpaceOnUse">
        <path d="M0 .5h4" stroke="#2cf4f4" strokeWidth="1" opacity=".75" />
        <path d="M1 1.500h1M3 2.500h1" stroke="#a4d4d4" strokeWidth="1" />
      </pattern>
      <pattern id="dots" width="4" height="5" patternUnits="userSpaceOnUse">
        <path d="M1 0v3" stroke="#08b4b8" strokeWidth="1" />
      </pattern>
    </defs>

    {/* rapid moves */}
    <g stroke="#d40000" strokeWidth="1.300">
      <path d="M551 284L735 312M551 284L547 358M543 302L735 312M542 302L539 352M459 319L735 314M459 319L455 390" />
      <path d="M534 304L735 312M534 304L531 356M726 313L724 400L716 520M590 299L588 336" strokeDasharray="8 5" />
      <path d="M676 297L674 342" />
      <path d="M735 313L732 370" strokeWidth="3" stroke="#f00000" />
      <path d="M732 370L723 545" strokeWidth="2" />
    </g>
    <g stroke="#0c0cc8" strokeWidth="1.200">
      <path d="M541 302L538 354M578 314L574 386M497 323L494 378M518 357L582 339L606 332M518 357L516 388M685 298L682 343M439 393L431 554" />
      {range(24).map((k) => (
        <path key={k} d={`M${439 - k * 0.35} ${393 + k * 6.5}L${496 - k * 0.3} ${370 + k * 6.5}`} />
      ))}
      {range(6).map((k) => (
        <path key={k} d={`M${548 + k} ${356 + k * 3}L${563 - k} 388`} />
      ))}
    </g>

    {/* left engage and retract passes */}
    {range(24).map((k) => {
      const x = 439 - k * 0.33;
      const y = 404 + k * 6.55;
      return (
        <g key={k}>
          <path d={`M${x} ${y}l28 12`} stroke="#d89c10" strokeWidth="1.200" />
          <path d={`M${x + 28} ${y + 12}l18 7`} stroke={CYAN} />
          <path d={`M${x + 33} ${y + 26}v7l15-7M${x + 33} ${y + 29}l14-5`} stroke="#cfa8dc" strokeWidth="1.200" />
        </g>
      );
    })}
    {range(4).map((k) => (
      <g key={k}>
        <path d={`M456 ${371 + k * 6}l17 8`} stroke="#d89c10" />
        <path d={`M473 ${379 + k * 6}l34 11`} stroke={CYAN} />
        <path d={`M502 ${367 + k * 7}l38 -14`} stroke="#08c808" strokeWidth="1.300" />
        <path d={`M502 ${367 + k * 7}l8 5`} stroke="#08c808" />
        <path d={`M540 ${356 + k * 8}q20 18 58 ${22 - k * 5}`} stroke={CYAN} />
        <path d={`M496 ${379 + k * 5}h36`} stroke="#cfa8dc" strokeWidth="1.200" />
        <path d={`M540 ${366 + k * 7}h8v5`} stroke="#e0a010" />
      </g>
    ))}
    {range(24).map((k) => (
      <g key={k}>
        <path d={`M${504 - k * 0.2} ${384 + k * 6.3}h-${8 - (k % 2)}v6`} stroke="#d8b0e0" strokeWidth="1.400" />
        <ellipse cx={501 - k * 0.1} cy={408 + k * 6.3} rx="3" ry="3" stroke={CYAN} />
      </g>
    ))}

    {/* right engage and retract loops */}
    {range(31).map((k) => {
      const x = 712 - k * 0.15;
      const y = 357 + k * 6.1;
      return (
        <g key={k}>
          <path d={`M${x} ${y + 3}q4 -5 14 -4q12 -1 17 3`} stroke="#d89c10" strokeWidth="1.100" />
          <path d={`M${x + 31} ${y + 2}h21l-1 10q-14 8 -38 6M${x} ${y + 8}q18 7 40 1l11 -4`} stroke={CYAN} strokeWidth=".9" />
          <ellipse cx={x + 1} cy={y + 5} rx="5" ry="3" stroke={CYAN} />
        </g>
      );
    })}
    {range(18).map((k) => (
      <ellipse key={k} cx="593" cy={352 + k * 3} rx="5" ry="3" stroke={CYAN} />
    ))}

    {/* stock base */}
    <path d="M500 563L592 585V613L498 591z" fill="#a4a4a4" />
    <path d="M592 585L612 584V613H592z" fill="#cfcfcf" />
    <path d="M612 584L719 543V569L612 613z" fill="#dedede" />
    <path d="M500 563L530 545L690 532L719 543L612 584L592 585z" fill="#ffffc4" />
    <path d="M500 564L592 586H612L719 544" stroke="#c8962a" />

    {/* machined towers */}
    <path
      d="M503 404C508 394 545 391 592 391V362Q594 346 610 342C640 336 672 338 690 345Q709 351 710 362V424L705 536Q676 545 656 552L648 568Q628 582 606 585Q570 586 540 574L500 562z"
      fill="#00f8f8"
    />
    <path d="M617 362L686 359V541L650 552V400H617z" fill="#58d0d0" />
    <path d="M661 395L684 390V540L660 546z" fill="#84ecec" />
    <path d="M532 406L580 424V586Q550 582 524 560z" fill="#60d8d8" />
    <path d="M568 420L580 424L577 578L561 574z" fill="#14c4c4" />
    <path d="M580 424H632L628 578Q605 586 578 584z" fill="#8cecec" />
    <path d="M588 424H606L594 582H588z" fill="#04c0cc" />
    <path d="M503 405L532 406L524 562L500 560zM686 359L709 362V424L704 536L682 538z" fill="url(#dots)" />
    <path d="M532 406L580 424H710L704 536L656 551L600 585L524 562z" fill="url(#mesh)" />
    <path d="M617 364L686 361V424H640L617 400z" fill="url(#mesh)" />
    <path d="M636 424H652V562L632 574z" fill="#00f8f8" />
    <path d="M600 372Q606 356 620 352M598 384H690M640 352Q670 344 704 362" stroke="#00f8f8" strokeWidth="2" />
    {range(14).map((k) => (
      <path key={k} d={`M502 ${416 + k * 11}l40 6l40 8h48`} stroke="#00f4f4" />
    ))}
    {range(5).map((k) => (
      <path key={k} d={`M520 ${562 + k * 3}q60 22 120 ${-6 + k}`} stroke="#8cf8e0" />
    ))}
    {range(4).map((k) => (
      <path key={k} d={`M640 ${416 + k * 7}l44 -14`} stroke="#48e878" strokeDasharray="6 2" />
    ))}
    <path d="M705 348L702 430L694 570" stroke="#e83838" strokeDasharray="8 5" />

    {/* caps */}
    <path d="M617 356L663 366L686 356V361L664 370L617 362z" fill="#3c9c34" />
    <path d="M622 354L644 344L682 349L684 356L660 362z" fill="#ffffc0" stroke="#d85050" strokeWidth=".8" />
    <path d="M530 402L577 417L600 419L629 411V417L602 424L577 423L530 406z" fill="#3c9c34" />
    <path d="M530 402L553 396L582 398L618 408L613 414L582 417z" fill="#ffffc0" stroke="#d85050" strokeWidth=".8" />

    {/* part bounding box */}
    <g stroke="#d8305c" strokeWidth="1.100">
      <path d="M506 381L625 335L732 359L613 403zM506 381L497 592L603 614L721 569" />
      <path d="M613 403L603 614M732 359L721 569" stroke="#f08090" />
    </g>

    {/* base profile passes */}
    {range(5).map((k) => (
      <path
        key={k}
        d={`M498 ${558 + k * 5}L472 ${570 + k * 4}Q466 ${582 + k * 3} 478 ${588 + k * 4}L${588 + k * 2} ${609 + k * 5}Q612 ${613 + k * 5} 628 ${606 + k * 5}L744 ${562 + k * 4}Q748 ${554 + k * 5} 745 ${542 + k * 4}L722 ${537 + k * 5}`}
        stroke={CYAN}
      />
    ))}

    {/* transfer moves */}
    <g stroke="#0c18f0">
      <path d="M472 418L600 421L712 424M472 418L470 470" strokeWidth="1.600" />
      <path d="M677 342L636 392L634 426M683 343L641 392L638 424" strokeWidth="2.600" />
      <path d="M711 423V490L708 540" strokeWidth="5" />
      <path d="M635 426L629 578" strokeWidth="3" />
      <path d="M708 540L706 572M694 555V575" strokeWidth="1.300" />
    </g>
    <path d="M636 428L629 578M706 428L704 584" stroke="#e0a830" strokeWidth="2" strokeDasharray="3 2" />

    {/* coordinate triads */}
    <path d="M620 370L623 300" stroke="#1448d8" strokeWidth="2" />
    <path d="M623 288L626 306H620z" fill="#1448d8" />
    <path d="M620 370L585 383" stroke="#c83c34" strokeWidth="1.400" />
    <path d="M602 374L597 379L614 371zM587 380L574 386L584 387z" fill="#c83c34" stroke="#c83c34" />
    <path d="M620 370L684 384" stroke="#2c7c3c" strokeWidth="1.400" />
    <path d="M646 373L660 379L645 378zM675 379L688 385L674 384z" fill="#2c7c3c" />
    <g fontFamily="Liberation Sans" fontSize="11">
      <text x="606" y="289" fill="#1c50e0">ZM</text>
      <text x="606" y="325" fill="#1c50e0">ZC</text>
      <text x="595" y="389" fill="#a05c5c">XC</text>
      <text x="575" y="398" fill="#a05c5c">XM</text>
      <text x="645" y="389" fill="#3a9a70">YC</text>
      <text x="675" y="396" fill="#3a9a70">YM</text>
    </g>

    {/* channel badge */}
    <circle cx="688" cy="623" r="11" fill="#e4e4e4" />
    <circle cx="684" cy="618" r="1.500" fill="#222" />
    <circle cx="692" cy="618" r="1.500" fill="#222" />
    <text x="717" y="630" fill="#eee" fontFamily="Noto Sans CJK SC" fontSize="17">软件技</text>
  </SceneSvg>
);

/* ---------- page ---------- */

const Small = ({ icon, label }: { icon: React.ReactNode; label: string }) => (
  <SmallButton>
    {icon}
    {label}
  </SmallButton>
);
const Big = ({ icon, label, w }: { icon: React.ReactNode; label: string; w?: number }) => (
  <BigButton $w={w}>
    {icon}
    {label}
  </BigButton>
);
const RibbonGroup = ({ name, w, pad, children }: { name: string; w: number; pad: number } & Kids) => (
  <Group $w={w} $pad={pad}>
    <GroupBody>{children}</GroupBody>
    <GroupFoot $pad={pad}>
      <GroupName>{name}</GroupName>
      <Caret />
    </GroupFoot>
  </Group>
);

const sideItems: { label: string; icon: React.ReactNode; h?: number; on?: boolean }[] = [
  { label: "设置", icon: <Gear />, h: 22 },
  { label: "装配导航器", icon: <SideAssembly /> },
  { label: "约束导航器", icon: <SideConstraint /> },
  { label: "部件导航器", icon: <SidePart /> },
  { label: "工序导航器", icon: <SideOps />, on: true },
  { label: "机床导航器", icon: <SideMachine /> },
  { label: "加工特征", icon: <SideTools />, h: 32 },
  { label: "重用库", icon: <SideLibrary />, h: 34 },
  { label: "信息", icon: <SideInfo />, h: 52 },
  { label: "浏览器", icon: <SideWeb />, h: 34 },
  { label: "历史记录", icon: <SideClock />, h: 50 },
  { label: "颜色", icon: <SideColors />, h: 20 },
  { label: "加工向导", icon: <SideMill />, h: 46 },
];

export default function App() {
  return (
    <Frame>
      <GlobalStyle />
      <QuickBar>
        <Logo>NX</Logo>
        <Rule $gap={3} />
        <QuickButton $w={18} aria-label="保存"><Save /></QuickButton>
        <Rule />
        <QuickButton $w={20} aria-label="撤销"><Undo /></QuickButton>
        <QuickButton $w={12} aria-label="撤销列表"><Caret /></QuickButton>
        <Rule />
        <QuickButton $w={18} aria-label="剪切"><Cut /></QuickButton>
        <QuickButton $w={18} aria-label="复制"><Copy /></QuickButton>
        <QuickButton $w={18} aria-label="粘贴"><Paste /></QuickButton>
        <Rule />
        <QuickButton $w={18} aria-label="打开"><Open /></QuickButton>
        <QuickButton $w={12} aria-label="打开列表"><Caret /></QuickButton>
        <Rule />
        <QuickButton $w={18} aria-label="触控"><Touch /></QuickButton>
        <Rule />
        <QuickButton><SwitchWin />切换窗口</QuickButton>
        <QuickButton $w={56}><WinIcon />窗口<Caret /></QuickButton>
        <QuickButton $w={10} aria-label="更多命令"><Caret /></QuickButton>
      </QuickBar>

      <MenuTabs>
        <MenuTab $kind="file">文件(F)</MenuTab>
        <MenuTab $kind="on">分析</MenuTab>
        {["应用模块", "曲线", "内部", "渲染", "工具", "视图", "装配", "主页"].map((t) => (
          <MenuTab key={t}>{t}</MenuTab>
        ))}
      </MenuTabs>

      <Ribbon>
        <RibbonGroup name="测量" w={217} pad={7}>
          <Big icon={<SimpleDist />} label="简单距离" />
          <Big icon={<SimpleAngle />} label="简单角度" />
          <SmallStack $w={74}>
            <Small icon={<RulerH />} label="测量距离" />
            <Small icon={<AngleRuler />} label="测量角度" />
            <Small icon={<Radius />} label="局部半径" />
          </SmallStack>
          <BigButton $w={31}>
            <MoreBox><MoreRuler /></MoreBox>
            更多
            <Caret />
          </BigButton>
        </RibbonGroup>
        <RibbonGroup name="显示" w={264} pad={6}>
          <Big icon={<Poles />} label="显示极点" />
          <Big icon={<Knots />} label="显示结点" />
          <Big icon={<Ends />} label="显示端点" />
          <SmallStack $w={96}>
            <Small icon={<Mirror />} label="镜像显示" />
            <Small icon={<MirrorSet />} label="设置镜像平面..." />
            <Small icon={<Block />} label="显示阻碍的" />
          </SmallStack>
        </RibbonGroup>
        <RibbonGroup name="曲线形状" w={142} pad={5}>
          <SmallStack $w={79}>
            <Small icon={<Comb />} label="显示曲率梳" />
            <Small icon={<Peak />} label="显示峰值点" />
            <Small icon={<Inflect />} label="显示拐点" />
          </SmallStack>
          <Big icon={<CurveCalc />} label="曲线分析" />
        </RibbonGroup>
        <RibbonGroup name="面形状" w={163} pad={6}>
          <Big icon={<Section />} label="截面分析" />
          <Big icon={<Reflect />} label="反射" w={32} />
          <SmallStack $w={68}>
            <Small icon={<Highlight />} label="高亮线" />
            <Small icon={<Draft />} label="拔模分析" />
            <Small icon={<FaceCurv />} label="面曲率" />
          </SmallStack>
        </RibbonGroup>
        <RibbonGroup name="" w={80} pad={6}>
          <Big icon={<Pic size={26} />} label="偏差度量" />
        </RibbonGroup>
      </Ribbon>

      <Toolbar>
        <MenuButton>
          <MenuTeeth />
          <span>菜单(<u>M</u>)</span>
          <Caret />
        </MenuButton>
        <Rule $gap={5} />
        <Tool $on aria-label="程序顺序视图"><Nodes /></Tool>
        <Tool aria-label="机床视图"><NodeTree /></Tool>
        <Tool aria-label="几何视图"><CubeTree c="#7c8ce8" /></Tool>
        <Tool aria-label="加工方法视图"><Bars /></Tool>
        <Rule $gap={4} />
        <Tool $on aria-label="刀轨"><Wave /></Tool>
        <Tool aria-label="工件"><CubeTree c="#d88c8c" /></Tool>
        <Rule $gap={7} />
        <Pick $w={133} $gap={7}>
          <PickSelect aria-label="选择过滤器"><option>无选择过滤器</option></PickSelect>
          <Caret />
        </Pick>
        <Pick $w={140} $gap={3}>
          <PickSelect aria-label="选择范围"><option>整个装配</option></PickSelect>
          <Caret />
        </Pick>
        <Tool aria-label="装配过滤"><Pale /></Tool>
        <Tool aria-label="细节过滤"><PaleFilter /></Tool>
        <Tool aria-label="类型过滤"><BoxFilter /></Tool>
        <ToolCaret aria-label="过滤列表"><Caret /></ToolCaret>
        <Tool aria-label="捕捉点"><ArcPoint /></Tool>
        <Tool aria-label="工具"><Hammer /></Tool>
        <Tool aria-label="点构造"><Dots /></Tool>
        <Tool aria-label="矩形选择"><Marquee /></Tool>
        <ToolCaret aria-label="选择列表"><Caret /></ToolCaret>
        <Tool aria-label="实体"><Shell /></Tool>
        <Tool $on aria-label="着色"><BlueCube /></Tool>
        <Rule $gap={5} />
        <Tool aria-label="适合窗口"><FitView /></Tool>
        <Tool aria-label="平移"><PanView /></Tool>
        <Tool aria-label="旋转"><RotateView /></Tool>
        <Tool aria-label="透视"><Tube /></Tool>
      </Toolbar>

      <Workspace>
        <SideBar>
          {sideItems.map((s) => (
            <SideButton key={s.label} aria-label={s.label} $h={s.h} $on={s.on}>
              {s.icon}
            </SideButton>
          ))}
        </SideBar>

        <Navigator>
          <NavHead>
            工序导航器 - 程序顺序
            <MaxButton aria-label="最大化" />
          </NavHead>
          <Tree>
            <colgroup>
              <col width="179" />
              <col width="32" />
              <col width="26" />
              <col width="63" />
              <col width="22" />
            </colgroup>
            <thead>
              <tr>
                <Th>名称</Th>
                <Th>换...</Th>
                <Th>刀..</Th>
                <Th>刀具</Th>
                <Th>时间</Th>
              </tr>
            </thead>
            <tbody>
              {rows.map((r, i) => (
                <TreeRow key={i} row={r} index={i} />
              ))}
              {range(7).map((i) => (
                <Tr key={i} $alt={i % 2 === 1}>
                  <Td $name />
                  <Td />
                  <Td />
                  <Td />
                  <Td />
                </Tr>
              ))}
            </tbody>
          </Tree>
        </Navigator>

        <Graphics>
          <DocTabs>
            <DocTab><PartMill />SMDJ-1 (16).prt<Popout /></DocTab>
            <DocTab><PartSolid />SMDJ-1 (22).prt<Popout /></DocTab>
            <DocTab><PartMill />SMDJ-1 (24).prt<Popout /></DocTab>
            <DocTab><PartMill />SMDJ-1 (25).prt<Popout /></DocTab>
          </DocTabs>
          <Viewport>
            <Scene />
          </Viewport>
        </Graphics>
      </Workspace>
    </Frame>
  );
}
